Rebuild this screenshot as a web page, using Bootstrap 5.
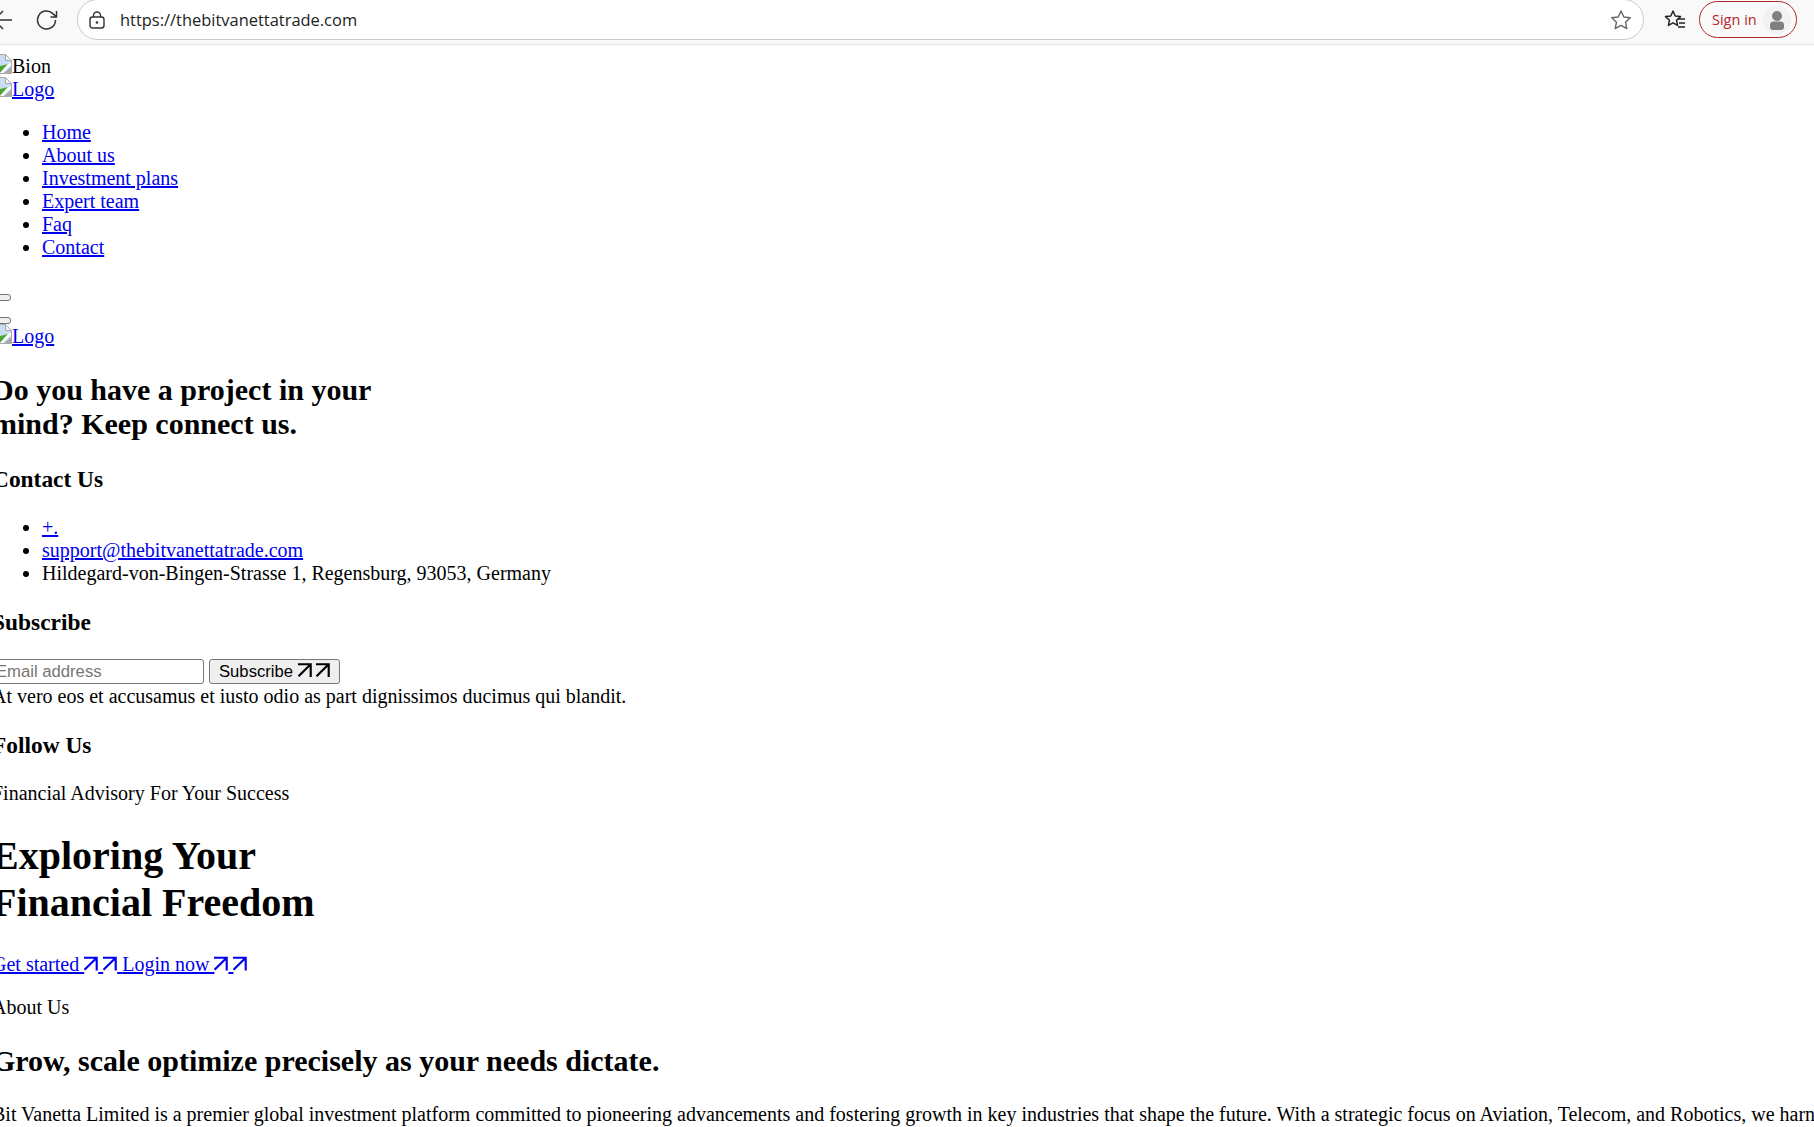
<!DOCTYPE html>
<html lang="en">
<head>
<meta charset="utf-8">
<title>Bit Vanetta</title>
<link href="https://cdn.jsdelivr.net/npm/bootstrap@5.3.0/dist/css/bootstrap.min.css" rel="stylesheet">
<style>
html,body{margin:0;padding:0;height:1127px;overflow:hidden;background:#fff}
body{font-family:"Liberation Serif","Times New Roman",serif;font-size:20px;line-height:normal;color:#000}
a{color:#00e;text-decoration:underline}
.chrome-bar{height:45px;padding-bottom:5px;background:#f9f9f9;border-bottom:1px solid #e6e6e6;font-family:"Open Sans","Noto Sans",sans-serif}
.back-ic{width:14px;height:20px;flex:none}
.reload-ic{margin-left:21px;flex:none}
.addr-pill{flex:none;width:1567px;height:41px;margin-left:18px;background:#fff;border:1.5px solid #c9c9c9;border-radius:21px;font-size:16.45px;color:#222}
.lock-ic{margin-left:11px;margin-right:15px}
.fav-ic{flex:none;margin-left:19px;margin-right:12px}
.signin-pill{flex:none;width:98px;height:37px;border:1.5px solid #b3262a;border-radius:19px;font-size:14.5px;color:#b3262a}
.avatar-ic{margin-right:-3px}
.page-flow{margin-left:-8px;width:1822px;padding-top:9px}
.broken-ic{vertical-align:-1px}
.alt-line{height:23px}
.plain-list{margin:21px 0 20px;padding-left:50px;list-style:disc}
.plain-btn{display:block;width:19px;height:7px;border:1.5px solid #767676;border-radius:3px;background:#efefef;padding:0}
.btn-one{margin-top:35px}
.btn-two{margin-top:16px}
.h-lg{font-size:40px;font-weight:700;line-height:47px;margin:27px 0 0}
.h-md{font-size:30px;font-weight:700;line-height:34px;margin:26px 0 0}
.h-sm{font-size:23.4px;font-weight:700;line-height:27px;margin:24px 0 0}
.h-first{margin-top:25px}
.txt-p{margin:0;line-height:23px}
.gap-t{margin-top:23px}
.gap-m{margin-top:27px}
.gap-a{margin-top:20px}
.list-t{margin-top:23px}
.sub-form{margin-top:23px}
.email-box{width:212px;height:25px;border:1.5px solid #767676;border-radius:3px;padding:1px 3px;font:16.67px "Liberation Sans",Arial,sans-serif;background:#fff}
.email-box::placeholder{color:#757575;opacity:1}
.sub-btn{height:25px;border:1.5px solid #767676;border-radius:3px;background:#efefef;padding:0 9px;font:16.67px "Liberation Sans",Arial,sans-serif;color:#000;margin-left:5px;white-space:nowrap}
.para-t{margin-top:1px}
.arr{vertical-align:0}
.nowrap-line{white-space:nowrap;line-height:23px;margin:25px 0 0}
.h-grow{margin-top:25px}
</style>
</head>
<body>
<header class="chrome-bar d-flex align-items-center">
  <svg class="back-ic" viewBox="0 0 14 20"><path d="M-6 10H12M3 1-6 10l9 9" fill="none" stroke="#333" stroke-width="1.500"/></svg>
  <svg class="reload-ic" width="24" height="24" viewBox="0 0 24 24"><path d="M20.500 12a9 9 0 1 1-2.700-6.400L21 8.500M21.500 3v6h-6" fill="none" stroke="#333" stroke-width="1.500"/></svg>
  <div class="addr-pill d-flex align-items-center">
    <svg class="lock-ic" width="16" height="18" viewBox="0 0 16 18"><rect x="1" y="6" width="14" height="11" rx="2.500" fill="none" stroke="#333" stroke-width="1.400"/><path d="M4.500 6V4.500a3.500 3.500 0 0 1 7 0V6" fill="none" stroke="#333" stroke-width="1.400"/><circle cx="8" cy="11.500" r="1.300" fill="#333"/></svg>
    <span>https://thebitvanettatrade.com</span>
    <svg class="ms-auto" width="24" height="24" viewBox="0 0 24 24" style="margin-right:10px"><path d="M12 3l2.800 6 6.500.8-4.800 4.400 1.300 6.400L12 17.400 6.200 20.600l1.300-6.400L2.700 9.800 9.200 9z" fill="none" stroke="#666" stroke-width="1.400" stroke-linejoin="round"/></svg>
  </div>
  <svg class="fav-ic" width="24" height="24" viewBox="0 0 24 24"><path d="M10 3l2.200 5 5.300.6-4 3.600 1.100 5.200L10 14.800 5.400 17.400l1.100-5.200-4-3.600L7.800 8z" fill="none" stroke="#222" stroke-width="1.500" stroke-linejoin="round"/><path d="M15 11h7M16 15h6M15 19h7" stroke="#222" stroke-width="1.400"/></svg>
  <div class="signin-pill d-flex align-items-center justify-content-between ps-2 pe-2">
    <span class="ps-1">Sign in</span>
    <svg class="avatar-ic" width="28" height="28" viewBox="0 0 28 28"><circle cx="14" cy="14" r="14" fill="#f2f2f2"/><circle cx="14" cy="10" r="5" fill="#808080"/><path d="M7 21v-2a3.500 3.500 0 0 1 3.500-3.500h7A3.500 3.500 0 0 1 21 19v2a3 3 0 0 1-3 3h-8a3 3 0 0 1-3-3z" fill="#808080"/></svg>
  </div>
</header>
<main class="page-flow">
  <div class="alt-line"><svg class="broken-ic" width="20" height="20" viewBox="0 0 20 20"><path d="M.500.500h13l6 6v13H.500z" fill="#c8dcf5" stroke="#a9a9a9"/><path d="M13.500.500v6h6z" fill="#f4f4f4" stroke="#a9a9a9"/><path d="M1 19V14l7-2 8-2-8 9z" fill="#4da832"/><path d="M16 10 8 19h3l8-8V9z" fill="#fff"/><path d="M19 13l-7 6h7z" fill="#a9a9a9"/></svg>Bion</div>
  <div class="alt-line"><a href="#"><svg class="broken-ic" width="20" height="20" viewBox="0 0 20 20"><path d="M.500.500h13l6 6v13H.500z" fill="#c8dcf5" stroke="#a9a9a9"/><path d="M13.500.500v6h6z" fill="#f4f4f4" stroke="#a9a9a9"/><path d="M1 19V14l7-2 8-2-8 9z" fill="#4da832"/><path d="M16 10 8 19h3l8-8V9z" fill="#fff"/><path d="M19 13l-7 6h7z" fill="#a9a9a9"/></svg>Logo</a></div>
  <ul class="plain-list">
    <li><a href="#">Home</a></li>
    <li><a href="#">About us</a></li>
    <li><a href="#">Investment plans</a></li>
    <li><a href="#">Expert team</a></li>
    <li><a href="#">Faq</a></li>
    <li><a href="#">Contact</a></li>
  </ul>
  <button class="plain-btn btn-one" type="button" aria-label="Open"></button>
  <button class="plain-btn btn-two" type="button" aria-label="Close"></button>
  <div class="alt-line"><a href="#"><svg class="broken-ic" width="20" height="20" viewBox="0 0 20 20"><path d="M.500.500h13l6 6v13H.500z" fill="#c8dcf5" stroke="#a9a9a9"/><path d="M13.500.500v6h6z" fill="#f4f4f4" stroke="#a9a9a9"/><path d="M1 19V14l7-2 8-2-8 9z" fill="#4da832"/><path d="M16 10 8 19h3l8-8V9z" fill="#fff"/><path d="M19 13l-7 6h7z" fill="#a9a9a9"/></svg>Logo</a></div>
  <h2 class="h-md">Do you have a project in your<br>mind? Keep connect us.</h2>
  <h3 class="h-sm h-first">Contact Us</h3>
  <ul class="plain-list list-t">
    <li><a href="#">+.</a></li>
    <li><a href="#">support@thebitvanettatrade.com</a></li>
    <li>Hildegard-von-Bingen-Strasse 1, Regensburg, 93053, Germany</li>
  </ul>
  <h3 class="h-sm">Subscribe</h3>
  <form class="d-flex sub-form" onsubmit="return false">
    <input class="email-box" type="email" placeholder="Email address">
    <button class="sub-btn" type="button">Subscribe <svg class="arr" width="14" height="14" viewBox="0 0 13 13"><path d="M.500 12.300 11.800 1.200M0 1.200h11.800v11.800" fill="none" stroke="#000" stroke-width="2"/></svg> <svg class="arr" width="14" height="14" viewBox="0 0 13 13"><path d="M.500 12.300 11.800 1.200M0 1.200h11.800v11.800" fill="none" stroke="#000" stroke-width="2"/></svg></button>
  </form>
  <p class="txt-p para-t">At vero eos et accusamus et iusto odio as part dignissimos ducimus qui blandit.</p>
  <h3 class="h-sm">Follow Us</h3>
  <p class="txt-p gap-t">Financial Advisory For Your Success</p>
  <h1 class="h-lg">Exploring Your<br>Financial Freedom</h1>
  <p class="txt-p gap-m"><a href="#">Get started <svg class="arr" width="14" height="15" viewBox="0 0 13 13"><path d="M.500 12.300 11.800 1.200M0 1.200h11.800v11.800" fill="none" stroke="#00e" stroke-width="2"/></svg> <svg class="arr" width="14" height="15" viewBox="0 0 13 13"><path d="M.500 12.300 11.800 1.200M0 1.200h11.800v11.800" fill="none" stroke="#00e" stroke-width="2"/></svg> </a><a href="#">Login now <svg class="arr" width="14" height="15" viewBox="0 0 13 13"><path d="M.500 12.300 11.800 1.200M0 1.200h11.800v11.800" fill="none" stroke="#00e" stroke-width="2"/></svg> <svg class="arr" width="14" height="15" viewBox="0 0 13 13"><path d="M.500 12.300 11.800 1.200M0 1.200h11.800v11.800" fill="none" stroke="#00e" stroke-width="2"/></svg></a></p>
  <p class="txt-p gap-a">About Us</p>
  <h2 class="h-md h-grow">Grow, scale optimize precisely as your needs dictate.</h2>
  <p class="nowrap-line">Bit Vanetta Limited is a premier global investment platform committed to pioneering advancements and fostering growth in key industries that shape the future. With a strategic focus on Aviation, Telecom, and Robotics, we harness</p>
</main>
<script src="https://cdn.jsdelivr.net/npm/bootstrap@5.3.0/dist/js/bootstrap.bundle.min.js"></script>
</body>
</html>
